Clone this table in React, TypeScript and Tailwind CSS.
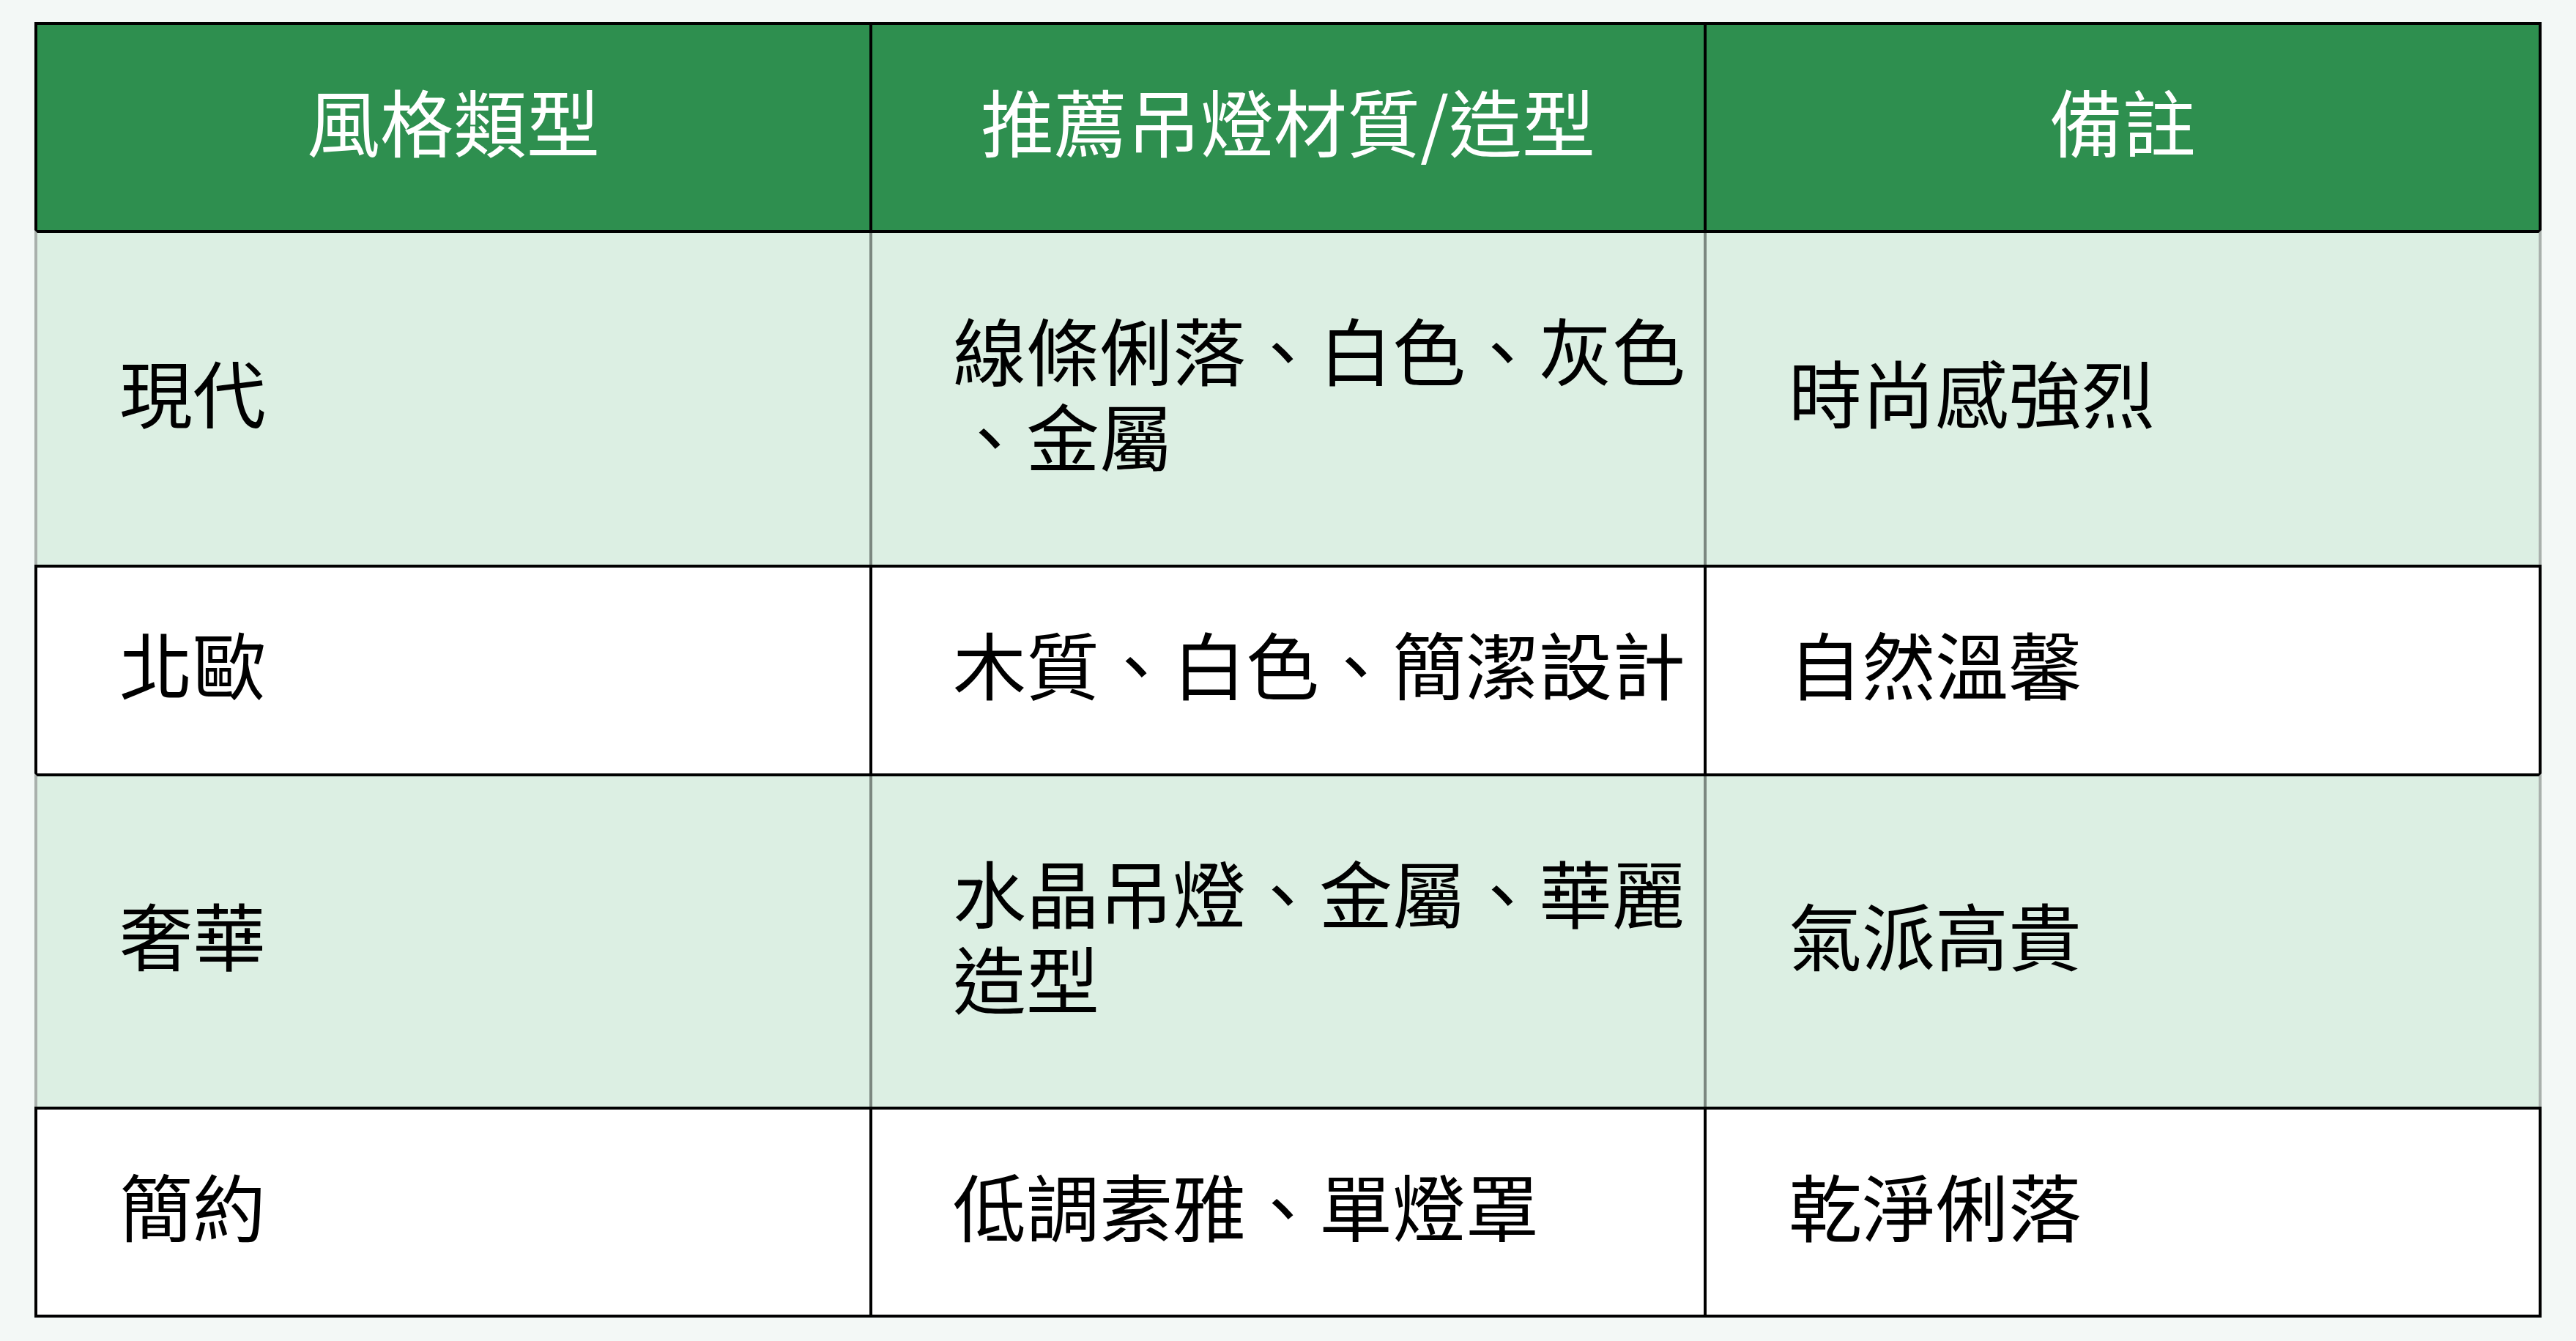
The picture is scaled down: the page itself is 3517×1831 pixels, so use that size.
import React from "react";

type Row = {
  style: string;
  note: string;
  material: string[];
  height: string;
  tint: boolean;
};

const rows: Row[] = [
  { style: "現代", material: ["線條俐落、白色、灰色", "、金屬"], note: "時尚感強烈", height: "h-[453px]", tint: true },
  { style: "北歐", material: ["木質、白色、簡潔設計"], note: "自然溫馨", height: "h-[281px]", tint: false },
  { style: "奢華", material: ["水晶吊燈、金屬、華麗", "造型"], note: "氣派高貴", height: "h-[451px]", tint: true },
  { style: "簡約", material: ["低調素雅、單燈罩"], note: "乾淨俐落", height: "h-[280px]", tint: false },
];

export default function App() {
  return (
    <div className="min-h-screen bg-[#f3f8f6] pl-[47px] pt-[30px] font-['Noto_Sans_CJK_TC','Noto_Sans',sans-serif]">
      <div className="w-[3423px] border-y-4 border-black text-[100px] leading-[117px]">
        {/* Header */}
        <div className="grid grid-cols-[1136px_1139px_1140px] border-x-4 border-black bg-[#2e8f4f] text-white">
          {["風格類型", "推薦吊燈材質/造型", "備註"].map((h, i) => (
            <div
              key={h}
              className={`flex h-[280px] items-center justify-center pb-[22px] ${i > 0 ? "border-l-4 border-black" : ""}`}
            >
              {h}
            </div>
          ))}
        </div>

        {/* Body rows */}
        {rows.map((r) => (
          <div
            key={r.style}
            className={`grid grid-cols-[1136px_1139px_1140px] border-t-4 border-t-black border-x-4 text-black ${
              r.tint ? "border-x-[#a9b0ac] bg-[#dcefe3]" : "border-x-black bg-white"
            }`}
          >
            <div className={`flex ${r.height} items-center pb-[22px] pl-[112px]`}>{r.style}</div>
            <div
              className={`flex ${r.height} items-center border-l-4 pb-[22px] pl-[110px] ${
                r.tint ? "border-l-[#7b877f]" : "border-l-black"
              }`}
            >
              <div>
                {r.material.map((line) => (
                  <div key={line} className="whitespace-nowrap">
                    {line}
                  </div>
                ))}
              </div>
            </div>
            <div
              className={`flex ${r.height} items-center border-l-4 pb-[22px] pl-[112px] ${
                r.tint ? "border-l-[#7b877f]" : "border-l-black"
              }`}
            >
              {r.note}
            </div>
          </div>
        ))}
      </div>
    </div>
  );
}
